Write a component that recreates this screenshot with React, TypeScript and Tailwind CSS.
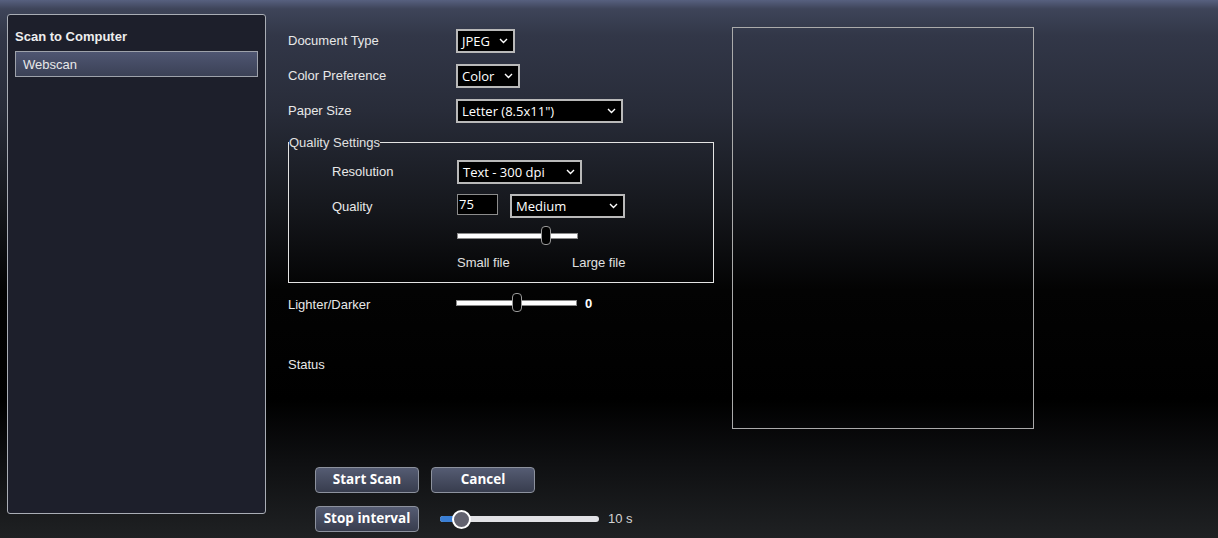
import React from "react"

const sans = "font-['Liberation_Sans',Arial,sans-serif]"
const ui = "font-['Open_Sans','Noto_Sans',sans-serif]"

function Chevron() {
  return (
    <svg width="9" height="6" viewBox="0 0 9 6" className="shrink-0">
      <path d="M1 1 L4.5 4.5 L8 1" fill="none" stroke="#fff" strokeWidth="1.4" />
    </svg>
  )
}

function FakeSelect({ value, width }: { value: string; width: string }) {
  return (
    <div
      className={`${width} h-[24px] flex items-center justify-between pl-[4px] pr-[5px] bg-black border-2 border-[#b9b9b9] text-white text-[13px] ${ui}`}
    >
      <span className="leading-none pt-[1px]">{value}</span>
      <Chevron />
    </div>
  )
}

function BarSlider({ pos }: { pos: number }) {
  return (
    <div className="relative w-[121px] h-[19px] flex items-center">
      <div className="w-full h-[6px] bg-white border border-[#8a8a8a]" />
      <div
        className="absolute top-0 w-[10px] h-[19px] bg-black border border-[#9a9a9a] rounded-[4px]"
        style={{ left: `${pos}px` }}
      />
    </div>
  )
}

function Row({ label, children, indent }: { label: string; children: React.ReactNode; indent?: boolean }) {
  return (
    <div className="flex items-center h-[24px]">
      <div className={`${indent ? "w-[125px]" : "w-[168px]"} text-[13px] text-[#e8e8e8] ${sans}`}>{label}</div>
      {children}
    </div>
  )
}

function Btn({ children }: { children: React.ReactNode }) {
  return (
    <button
      className={`w-[104px] h-[26px] rounded-[4px] border border-[#8d929e] bg-gradient-to-b from-[#555c73] to-[#383d4e] text-white font-bold text-[13.5px] leading-none ${ui}`}
    >
      {children}
    </button>
  )
}

export default function App() {
  return (
    <div className="w-[1218px] h-[538px] overflow-hidden flex items-start pl-[7px] pt-[14px] bg-[linear-gradient(to_bottom,#57607f_0px,#3e4459_9px,#323748_35px,#282c39_110px,#15171c_210px,#030303_290px,#000_400px,#0e0f11_460px,#1f2123_538px)]">
      {/* left list panel */}
      <div className="w-[259px] h-[500px] shrink-0 bg-[#1d1f2b] border border-[#a9adb5] rounded-[3px] px-[7px] pt-[13px]">
        <div className={`text-[13px] font-bold text-[#eeeeee] leading-[18px] ${sans}`}>Scan to Computer</div>
        <div
          className={`mt-[5px] h-[26px] flex items-center pl-[7px] pt-[2px] border border-[#9ea2ab] bg-gradient-to-b from-[#4f5672] to-[#3b4156] text-[13px] text-[#e8e8e8] ${sans}`}
        >
          Webscan
        </div>
      </div>

      {/* form */}
      <div className="ml-[22px] mt-[15px] w-[426px] shrink-0">
        <Row label="Document Type">
          <FakeSelect value="JPEG" width="w-[59px]" />
        </Row>
        <div className="mt-[11px]">
          <Row label="Color Preference">
            <FakeSelect value="Color" width="w-[64px]" />
          </Row>
        </div>
        <div className="mt-[11px]">
          <Row label="Paper Size">
            <FakeSelect value={'Letter (8.5x11")'} width="w-[167px]" />
          </Row>
        </div>

        <fieldset className="mt-[12px] border border-[#e4e4e4] pb-[12px]">
          <legend className={`text-[13px] text-[#e0e0e0] leading-[15px] ml-0 px-0 ${sans}`}>Quality Settings</legend>
          <div className="pl-[43px]">
            <div className="mt-[10px]">
              <Row label="Resolution" indent>
                <FakeSelect value="Text - 300 dpi" width="w-[125px]" />
              </Row>
            </div>
            <div className="mt-[10px] flex items-start h-[24px]">
              <div className={`w-[125px] pt-[3px] text-[13px] text-[#e8e8e8] ${sans}`}>Quality</div>
              <div className={`w-[41px] h-[21px] bg-black border border-[#8c8c8c] text-white text-[13px] pl-[1px] leading-[18px] ${ui}`}>
                75
              </div>
              <div className="ml-[12px]">
                <FakeSelect value="Medium" width="w-[115px]" />
              </div>
            </div>
            <div className="mt-[8px] ml-[125px]">
              <BarSlider pos={84} />
            </div>
            <div className={`mt-[10px] ml-[125px] flex text-[13px] text-[#e0e0e0] leading-[15px] ${sans}`}>
              <span className="w-[115px]">Small file</span>
              <span>Large file</span>
            </div>
          </div>
        </fieldset>

        <div className="mt-[10px] flex items-center h-[19px]">
          <div className={`w-[168px] pt-[4px] text-[13px] text-[#e8e8e8] ${sans}`}>Lighter/Darker</div>
          <BarSlider pos={56} />
          <span className={`ml-[8px] pt-[3px] text-[13px] font-bold text-white ${sans}`}>0</span>
        </div>

        <div className={`mt-[45px] text-[13px] text-[#e8e8e8] leading-[15px] ${sans}`}>Status</div>

        <div className="mt-[95px] pl-[27px] flex gap-[12px]">
          <Btn>Start Scan</Btn>
          <Btn>Cancel</Btn>
        </div>
        <div className="mt-[13px] pl-[27px] flex items-center">
          <Btn>Stop interval</Btn>
          <div className="relative ml-[21px] w-[159px] h-[19px] flex items-center">
            <div className="w-full h-[6px] rounded-full bg-[#e2e2e6]" />
            <div className="absolute left-0 w-[20px] h-[6px] rounded-l-full bg-[#3a7fd5]" />
            <div className="absolute left-[12px] top-0 w-[19px] h-[19px] rounded-full bg-[#62626f] border-2 border-white" />
          </div>
          <span className={`ml-[9px] text-[13px] text-[#d4d4d4] ${sans}`}>10 s</span>
        </div>
      </div>

      {/* preview */}
      <div className="ml-[18px] mt-[13px] w-[302px] h-[402px] shrink-0 border border-[#ababab]" />
    </div>
  )
}
